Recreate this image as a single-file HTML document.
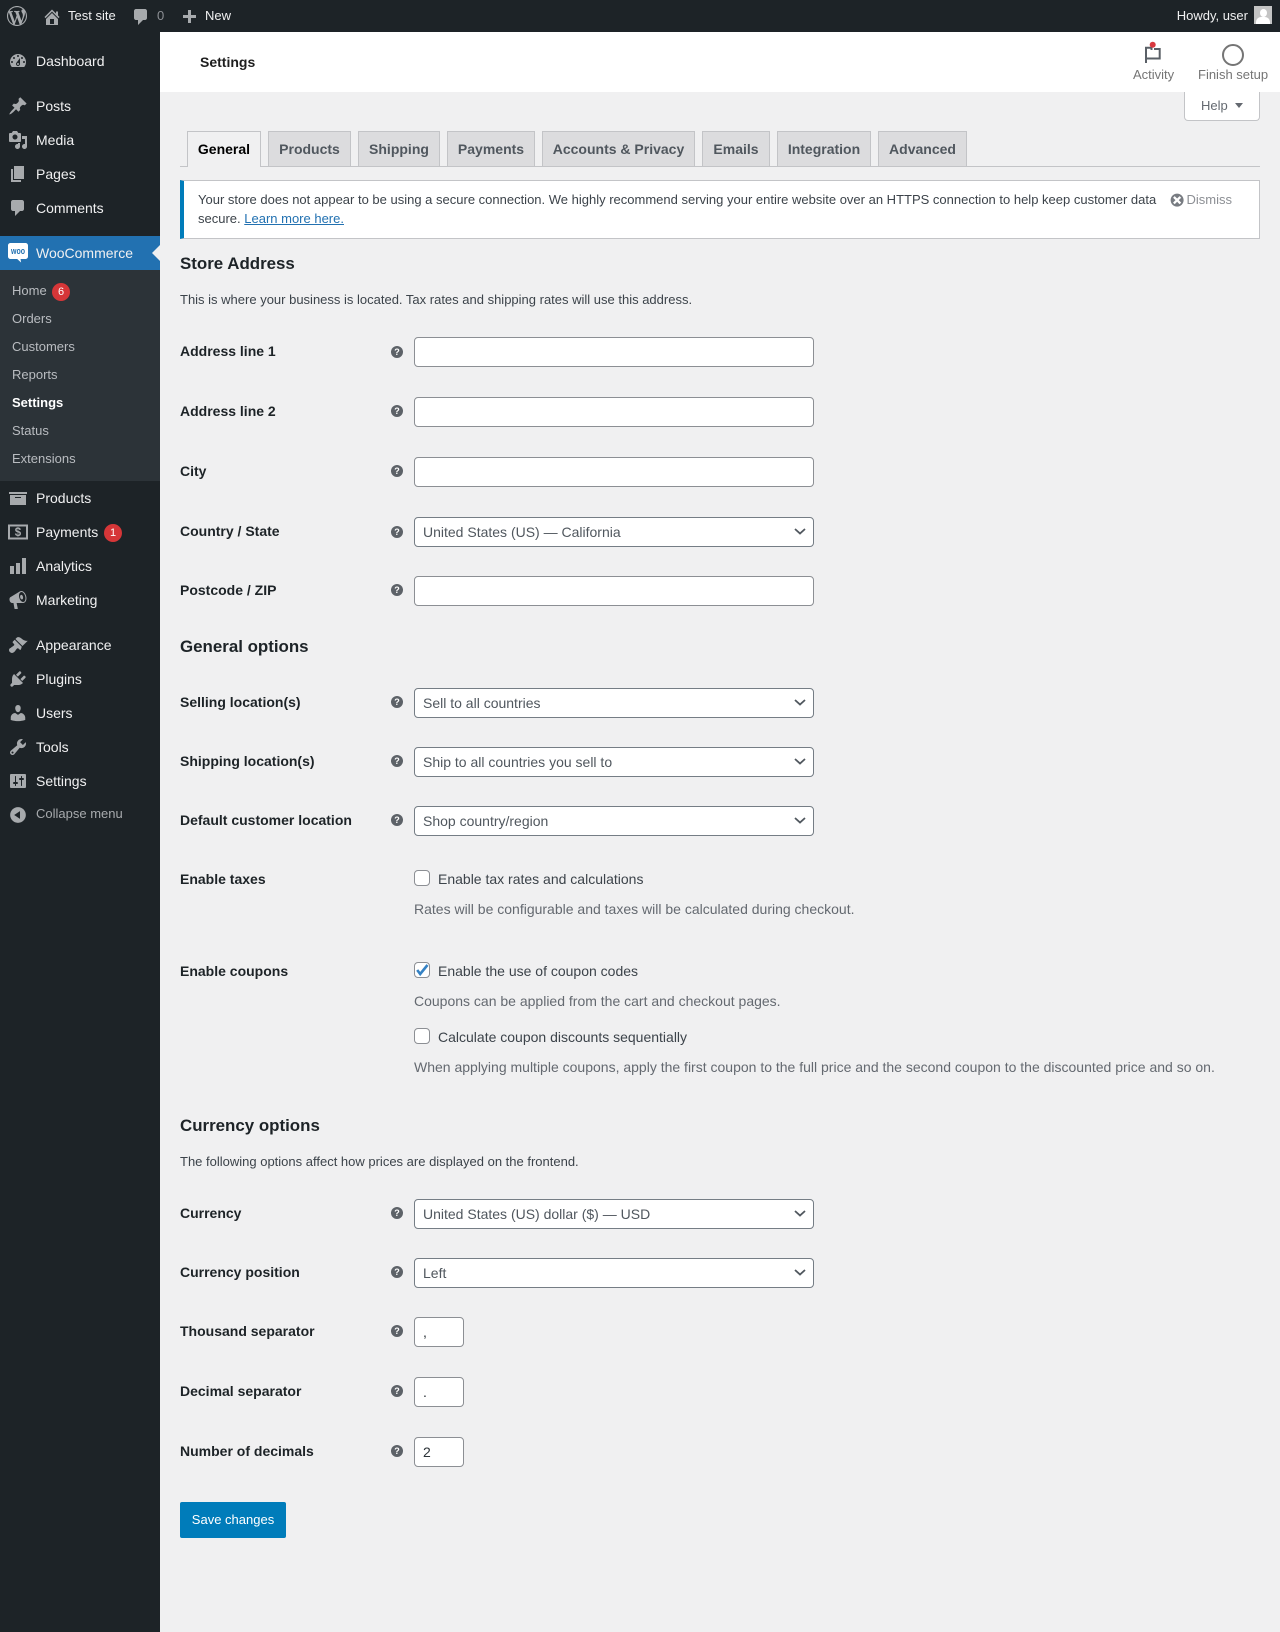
<!DOCTYPE html>
<html lang="en"><head><meta charset="utf-8"><title>Settings</title>
<style>
html,body{margin:0;padding:0;width:1280px;height:1632px;overflow:hidden;background:#f0f0f1;font-family:"Liberation Sans",sans-serif;font-size:13px;color:#3c434a}
div,span,a,svg{position:absolute;white-space:nowrap;display:block}
svg{overflow:visible}
a{position:static;display:inline;color:#2271b1;text-decoration:underline}
.t{line-height:20px;height:20px}
.m{left:36px;font-size:14px;color:#f0f0f1}
.i{left:8px;width:20px;height:20px;fill:#a7aaad}
.s{left:12px;font-size:13px;color:#b9bcc0}
.b{width:18px;height:18px;border-radius:50%;background:#d63638;color:#fff;font-size:11px;line-height:18px;text-align:center}
.bar{font-size:13px;color:#f0f0f1}
.h2{left:180px;font-size:16.9px;font-weight:700;color:#1d2327}
.d{left:180px;font-size:13px;color:#3c434a}
.l{left:180px;font-size:14px;font-weight:700;color:#1d2327}
.q{left:391px;width:12px;height:12px;border-radius:50%;background:#5d6268;color:#fff;font-size:9px;font-weight:700;line-height:12px;text-align:center}
.f{left:414px;width:398px;height:28px;background:#fff;border:1px solid #8c8f94;border-radius:4px}
.sel{border-color:#757d85;font-size:14px;color:#50575e;line-height:28px;text-indent:8px}
.sel svg{left:379px;top:10px;width:12px;height:7px;fill:none;stroke:#50575e;stroke-width:1.8}
.n{width:48px;font-size:14px;color:#2c3338;line-height:28px;text-indent:8px}
.c{left:414px;width:14px;height:14px;background:#fff;border:1px solid #8c8f94;border-radius:4px}
.cl{left:438px;font-size:14px;color:#3c434a}
.de{left:414px;font-size:14px;color:#646970}
.tab{box-sizing:border-box;top:131px;height:35px;line-height:34px;text-align:center;font-size:14px;font-weight:700;color:#50575e;background:#dcdcde;border:1px solid #c3c4c7;border-bottom:0}
</style></head><body>

<!-- admin bar -->
<div style="left:0;top:0;width:1280px;height:32px;background:#1d2327"></div>
<svg style="left:7px;top:6px;width:20px;height:20px;fill:#a7aaad" viewBox="0 0 20 20"><path d="M20 10c0-5.51-4.49-10-10-10C4.48 0 0 4.49 0 10c0 5.52 4.48 10 10 10 5.51 0 10-4.48 10-10zM7.78 15.37L4.37 6.22c.55-.02 1.17-.08 1.17-.08.5-.06.44-1.13-.06-1.11 0 0-1.45.11-2.37.11-.18 0-.37 0-.58-.01C4.12 2.69 6.87 1.11 10 1.11c2.33 0 4.45.87 6.05 2.34-.68-.11-1.65.39-1.65 1.58 0 .74.45 1.36.9 2.1.35.61.55 1.36.55 2.46 0 1.49-1.4 5-1.4 5l-3.03-8.37c.54-.02.82-.17.82-.17.5-.05.44-1.25-.06-1.22 0 0-1.44.12-2.38.12-.87 0-2.33-.12-2.33-.12-.5-.03-.56 1.2-.06 1.22l.92.08 1.26 3.41zM17.41 10c.24-.64.74-1.87.43-4.25.7 1.29 1.05 2.71 1.05 4.25 0 3.29-1.73 6.24-4.4 7.78.97-2.59 1.94-5.2 2.92-7.78zM6.1 18.09C3.12 16.65 1.11 13.53 1.11 10c0-1.3.23-2.48.72-3.59C3.25 10.3 4.67 14.2 6.1 18.09zm4.03-6.63l2.58 6.98c-.86.29-1.76.45-2.71.45-.79 0-1.57-.11-2.29-.33.81-2.38 1.62-4.74 2.42-7.1z"/></svg>
<svg style="left:42px;top:6.5px;width:20px;height:20px;fill:#a7aaad" viewBox="0 0 20 20"><path d="M16 8.5l1.53 1.53-1.06 1.06L10 4.62l-6.47 6.47-1.06-1.06L10 2.5l4 4v-2h2v4zm-6-2.46l6 5.99V18H4v-5.97zM12 17v-5H8v5h4z"/></svg>
<div class="t bar" style="left:68px;top:6px">Test site</div>
<svg style="left:131px;top:7px;width:20px;height:20px;fill:#a7aaad" viewBox="0 0 20 20"><path d="M5 2h9c1.100 0 2 .9 2 2v7c0 1.100-.9 2-2 2h-2l-5 5v-5H5c-1.100 0-2-.9-2-2V4c0-1.100.9-2 2-2z"/></svg>
<div class="t bar" style="left:157px;top:6px;color:#8c8f94">0</div>
<svg style="left:179px;top:8px;width:20px;height:20px;fill:#a7aaad" viewBox="0 0 20 20"><path d="M17 7v3h-5v5H9v-5H4V7h5V2h3v5h5z"/></svg>
<div class="t bar" style="left:205px;top:6px">New</div>
<div class="t bar" style="right:32px;top:6px">Howdy, user</div>
<div style="left:1254px;top:6px;width:18px;height:18px;background:#c4c4c4;overflow:hidden">
  <div style="left:5.500px;top:3px;width:7px;height:8px;border-radius:50%;background:#fff"></div>
  <div style="left:2px;top:11px;width:14px;height:9px;border-radius:5px 5px 0 0;background:#fff"></div>
</div>

<!-- sidebar -->
<div style="left:0;top:32px;width:160px;height:1600px;background:#1d2327"></div>
<div style="left:0;top:270px;width:160px;height:211px;background:#2c3338"></div>
<div style="left:0;top:236px;width:160px;height:34px;background:#2271b1"></div>
<div style="left:152px;top:245px;width:0;height:0;border:8px solid transparent;border-left:0;border-right-color:#f0f0f1"></div>

<svg class="i" style="top:51px" viewBox="0 0 20 20"><path d="M3.760 16h12.480c1.100-1.370 1.760-3.110 1.760-5 0-4.420-3.580-8-8-8s-8 3.580-8 8c0 1.890.66 3.630 1.760 5zM10 4c.55 0 1 .45 1 1s-.45 1-1 1-1-.45-1-1 .45-1 1-1zM6 6c.55 0 1 .45 1 1s-.45 1-1 1-1-.45-1-1 .45-1 1-1zm8 0c.55 0 1 .45 1 1s-.45 1-1 1-1-.45-1-1 .45-1 1-1zm-5.370 5.550L12 7v6c0 1.100-.9 2-2 2s-2-.9-2-2c0-.57.24-1.080.63-1.450zM4 10c.55 0 1 .45 1 1s-.45 1-1 1-1-.45-1-1 .45-1 1-1zm12 0c.55 0 1 .45 1 1s-.45 1-1 1-1-.45-1-1 .45-1 1-1zm-5 3c0-.55-.45-1-1-1s-1 .45-1 1 .45 1 1 1 1-.45 1-1z"/></svg>
<div class="t m" style="top:51px">Dashboard</div>
<svg class="i" style="top:96px" viewBox="0 0 20 20"><path d="M10.440 3.020l1.820-1.820 6.360 6.350-1.830 1.820c-1.050-.68-2.480-.57-3.410.36l-.75.75c-.92.93-1.040 2.350-.35 3.410l-1.830 1.820-2.410-2.410-2.800 2.790c-.42.42-3.380 2.710-3.800 2.290s1.860-3.390 2.280-3.810l2.790-2.790L4.100 9.360l1.830-1.820c1.050.69 2.480.57 3.400-.36l.75-.75c.93-.92 1.050-2.350.36-3.410z"/></svg>
<div class="t m" style="top:96px">Posts</div>
<svg class="i" style="top:130px" viewBox="0 0 20 20"><path d="M13 11V4c0-.55-.45-1-1-1h-1.670L9 1H5L3.670 3H2c-.55 0-1 .45-1 1v7c0 .55.45 1 1 1h10c.55 0 1-.45 1-1zM7 4.500c1.380 0 2.500 1.120 2.500 2.500S8.380 9.500 7 9.500 4.500 8.380 4.500 7 5.620 4.500 7 4.500zM14 6h5v10.500c0 1.380-1.120 2.500-2.500 2.500S14 17.880 14 16.500s1.120-2.500 2.500-2.500c.17 0 .34.02.5.05V9h-3V6zm-4 8.050V13h2v3.500c0 1.380-1.120 2.500-2.500 2.500S7 17.880 7 16.500 8.120 14 9.500 14c.17 0 .34.02.5.05z"/></svg>
<div class="t m" style="top:130px">Media</div>
<svg class="i" style="top:164px" viewBox="0 0 20 20"><path d="M6 15V2h10v13H6zm-1 1h8v2H3V5h2v11z"/></svg>
<div class="t m" style="top:164px">Pages</div>
<svg class="i" style="top:198px" viewBox="0 0 20 20"><path d="M5 2h9c1.100 0 2 .9 2 2v7c0 1.100-.9 2-2 2h-2l-5 5v-5H5c-1.100 0-2-.9-2-2V4c0-1.100.9-2 2-2z"/></svg>
<div class="t m" style="top:198px">Comments</div>

<svg style="left:8px;top:243px;width:20px;height:20px" viewBox="0 0 20 20"><path fill="#fff" d="M2.500 0h15C18.900 0 20 1.100 20 2.500v11c0 1.400-1.100 2.500-2.500 2.500H12.500l.6 3.500-3.900-3.500H2.500C1.100 16 0 14.900 0 13.500v-11C0 1.100 1.100 0 2.500 0z"/><text x="3" y="11" font-family="Liberation Sans" font-weight="700" font-size="9" textLength="14" lengthAdjust="spacingAndGlyphs" fill="#2271b1">woo</text></svg>
<div class="t m" style="top:243px">WooCommerce</div>

<div class="t s" style="top:281px">Home</div><div class="b" style="left:52px;top:283px">6</div>
<div class="t s" style="top:309px">Orders</div>
<div class="t s" style="top:337px">Customers</div>
<div class="t s" style="top:365px">Reports</div>
<div class="t s" style="top:393px;font-weight:700;color:#fff">Settings</div>
<div class="t s" style="top:421px">Status</div>
<div class="t s" style="top:449px">Extensions</div>

<svg class="i" style="top:488px" viewBox="0 0 20 20"><path d="M19 4v2H1V4h18zM2 7h16v10H2V7zm11 3V9H7v1h6z"/></svg>
<div class="t m" style="top:488px">Products</div>
<svg style="left:8px;top:522px;width:20px;height:20px" viewBox="0 0 20 20"><rect x="1" y="3.500" width="18" height="13" fill="none" stroke="#a7aaad" stroke-width="2"/><text x="10" y="14.200" font-family="Liberation Sans" font-weight="700" font-size="11.500" text-anchor="middle" fill="#a7aaad">$</text></svg>
<div class="t m" style="top:522px">Payments</div><div class="b" style="left:104px;top:524px">1</div>
<svg class="i" style="top:556px" viewBox="0 0 20 20"><path d="M18 18V2h-4v16h4zm-6 0V7H8v11h4zm-6 0v-8H2v8h4z"/></svg>
<div class="t m" style="top:556px">Analytics</div>
<svg class="i" style="top:590px" viewBox="0 0 20 20"><path d="M18.150 5.940c.46 1.620.38 3.220-.02 4.480-.42 1.280-1.260 2.180-2.300 2.480-.16.06-.26.06-.4.06-.06.02-.12.02-.18.02-.06.02-.14.02-.22.02H8.600l1.200 5.500c.02.14-.06.26-.14.34-.08.1-.24.16-.34.16H6.950c-.1 0-.26-.06-.34-.16-.08-.08-.16-.2-.14-.34l-1-5.500H4.250l-.02-.02c-.5.06-1.080-.18-1.540-.62s-.88-1.080-1.060-1.880c-.24-.8-.2-1.560-.02-2.200.18-.62.58-1.080 1.060-1.300l.02-.02 9-5.400c.1-.06.18-.1.24-.16.06-.04.14-.08.24-.12.16-.08.28-.12.5-.18 1.040-.3 2.240.1 3.220.98s1.840 2.240 2.260 3.860zm-2.580 5.980h-.02c.4-.1.74-.34 1.040-.7.58-.7.86-1.760.86-3.040 0-.64-.1-1.300-.28-1.980-.34-1.360-1.020-2.500-1.780-3.240s-1.680-1.100-2.460-.88c-.82.22-1.400.96-1.700 2-.32 1.040-.28 2.360.06 3.720.38 1.360 1 2.500 1.800 3.240.78.74 1.620 1.100 2.480.88zm-2.540-7.080c.22-.04.42-.02.62.04.38.16.76.48 1.020 1s.42 1.200.42 1.780c0 .3-.04.56-.12.8-.18.48-.44.84-.86.94-.34.1-.8-.06-1.140-.4s-.64-.86-.78-1.500c-.18-.62-.12-1.240.02-1.720s.48-.84.82-.94z"/></svg>
<div class="t m" style="top:590px">Marketing</div>

<svg class="i" style="top:635px" viewBox="0 0 20 20"><path d="M14.480 11.060L7.410 3.990l1.500-1.500c.5-.56 2.300-.47 3.510.32 1.210.8 1.430 1.280 2.910 2.100 1.180.64 2.450 1.260 4.450.85zm-.71.71L6.700 4.700 4.930 6.470c-.39.39-.39 1.020 0 1.410l1.060 1.060c.39.39.39 1.030 0 1.420-.6.6-1.430 1.110-2.210 1.690-.35.26-.7.53-1.010.84C1.430 13.260 1 14.190 1 15c0 .75.3 1.470.88 2.060.59.58 1.320.88 2.060.88.83 0 1.740-.42 2.550-1.230.31-.31.58-.66.84-1.010.58-.78 1.090-1.610 1.690-2.210.39-.39 1.030-.39 1.420 0l1.060 1.060c.39.39 1.020.39 1.410 0z"/></svg>
<div class="t m" style="top:635px">Appearance</div>
<svg class="i" style="top:669px" viewBox="0 0 20 20"><path d="M13.110 4.360L9.870 7.600 8 5.730l3.240-3.240c.35-.34 1.050-.2 1.560.32.52.51.66 1.210.31 1.550zm-8 1.770l.91-1.120 9.010 9.010-1.190.84c-.71.71-2.630 1.160-3.820 1.160H6.140L4.900 17.260c-.59.59-1.540.59-2.120 0-.59-.58-.59-1.530 0-2.120l1.240-1.240v-3.880c0-1.130.4-3.190 1.090-3.890zm7.260 3.970l3.240-3.240c.34-.35 1.040-.21 1.550.31.52.51.66 1.210.31 1.550l-3.240 3.250z"/></svg>
<div class="t m" style="top:669px">Plugins</div>
<svg class="i" style="top:703px" viewBox="0 0 20 20"><path d="M10 9.250c-2.270 0-2.730-3.440-2.730-3.440C7 4.020 7.820 2 9.970 2c2.160 0 2.980 2.020 2.710 3.810 0 0-.41 3.440-2.680 3.440zm0 2.570L12.720 10c2.390 0 4.520 2.330 4.520 4.530v2.490s-3.650 1.130-7.240 1.130c-3.650 0-7.240-1.130-7.240-1.130v-2.490c0-2.250 1.940-4.480 4.470-4.480z"/></svg>
<div class="t m" style="top:703px">Users</div>
<svg class="i" style="top:737px" viewBox="0 0 20 20"><path d="M16.680 9.770c-1.340 1.340-3.300 1.670-4.950.99l-5.410 6.520c-.99.99-2.590.99-3.580 0s-.99-2.590 0-3.570l6.520-5.420c-.68-1.650-.35-3.610.99-4.950 1.280-1.280 3.120-1.620 4.720-1.060l-2.890 2.890 2.820 2.820 2.860-2.870c.53 1.580.18 3.390-1.080 4.650zM3.810 16.210c.4.39 1.040.39 1.430 0 .4-.4.4-1.040 0-1.430-.39-.4-1.030-.4-1.430 0-.39.39-.39 1.030 0 1.430z"/></svg>
<div class="t m" style="top:737px">Tools</div>
<svg class="i" style="top:771px" viewBox="0 0 20 20"><path fill-rule="evenodd" d="M18 16V4c0-.55-.45-1-1-1H3c-.55 0-1 .45-1 1v12c0 .55.45 1 1 1h14c.55 0 1-.45 1-1zM8 11h1c.55 0 1 .45 1 1s-.45 1-1 1H8v1.500c0 .28-.22.5-.5.5s-.5-.22-.5-.5V13H6c-.55 0-1-.45-1-1s.45-1 1-1h1V5.500c0-.28.22-.5.5-.5s.5.22.5.5V11zm5-2h-1c-.55 0-1-.45-1-1s.45-1 1-1h1V5.500c0-.28.22-.5.5-.5s.5.22.5.5V7h1c.55 0 1 .45 1 1s-.45 1-1 1h-1v5.500c0 .28-.22.5-.5.5s-.5-.22-.5-.5V9z"/></svg>
<div class="t m" style="top:771px">Settings</div>
<svg class="i" style="top:805px" viewBox="0 0 20 20"><path d="M10 2.160c4.330 0 7.840 3.510 7.840 7.840s-3.510 7.840-7.840 7.840S2.160 14.330 2.160 10 5.710 2.160 10 2.160zm2 11.720V6.120L6.180 9.970z"/></svg>
<div class="t m" style="top:804px;font-size:13px;color:#a7aaad">Collapse menu</div>

<!-- header -->
<div style="left:160px;top:32px;width:1120px;height:60px;background:#fff"></div>
<div class="t" style="left:200px;top:52px;font-size:14px;font-weight:700;color:#1e1e1e">Settings</div>
<svg style="left:1143px;top:42px;width:20px;height:24px" viewBox="0 0 20 24"><path d="M3 21V5.700h5.500V8M11 7h5.700v9.500H3" fill="none" stroke="#5a6067" stroke-width="2"/><circle cx="9.700" cy="2.800" r="3" fill="#d9383f"/></svg>
<div class="t" style="left:1133px;top:65px;width:40px;text-align:center;font-size:13px;color:#757575">Activity</div>
<div style="left:1222px;top:44px;width:18px;height:18px;border:2px solid #757575;border-radius:50%"></div>
<div class="t" style="left:1198px;top:65px;font-size:13px;color:#757575">Finish setup</div>

<!-- help -->
<div style="left:1184px;top:92px;width:74px;height:28px;background:#fff;border:1px solid #c3c4c7;border-top:0;border-radius:0 0 4px 4px"></div>
<div class="t" style="left:1201px;top:96px;font-size:13px;color:#646970">Help</div>
<div style="left:1235px;top:103px;width:0;height:0;border:4px solid transparent;border-bottom:0;border-top:5px solid #646970"></div>

<!-- tabs -->
<div style="left:180px;top:166px;width:1080px;height:1px;background:#c3c4c7"></div>
<div class="tab" style="left:187px;width:74px;height:36px;background:#f0f0f1;color:#000">General</div>
<div class="tab" style="left:268px;width:83px">Products</div>
<div class="tab" style="left:358px;width:82px">Shipping</div>
<div class="tab" style="left:447px;width:88px">Payments</div>
<div class="tab" style="left:542px;width:153px">Accounts &amp; Privacy</div>
<div class="tab" style="left:702px;width:68px">Emails</div>
<div class="tab" style="left:777px;width:94px">Integration</div>
<div class="tab" style="left:878px;width:89px">Advanced</div>

<!-- notice -->
<div style="left:180px;top:180px;width:1075px;height:57px;background:#fff;border:1px solid #c3c4c7;border-left:4px solid #007cba"></div>
<div class="t" style="left:198px;top:190px;font-size:13px;color:#3c434a">Your store does not appear to be using a secure connection. We highly recommend serving your entire website over an HTTPS connection to help keep customer data</div>
<div class="t" style="left:198px;top:209px;font-size:13px;color:#3c434a">secure. <a>Learn more here.</a></div>
<svg style="left:1169.400px;top:191.700px;width:16.250px;height:16.250px;fill:#787c82" viewBox="0 0 20 20"><path d="M10 2c4.420 0 8 3.580 8 8s-3.580 8-8 8-8-3.580-8-8 3.580-8 8-8zm5 11l-3-3 3-3-2-2-3 3-3-3-2 2 3 3-3 3 2 2 3-3 3 3z"/></svg>
<div class="t" style="left:1186.500px;top:190px;font-size:13px;color:#8c8f94">Dismiss</div>

<!-- store address -->
<div class="t h2" style="top:254px">Store Address</div>
<div class="t d" style="top:290px">This is where your business is located. Tax rates and shipping rates will use this address.</div>

<div class="t l" style="top:341px">Address line 1</div><div class="q" style="top:346px">?</div><div class="f" style="top:337px"></div>
<div class="t l" style="top:401px">Address line 2</div><div class="q" style="top:405px">?</div><div class="f" style="top:397px"></div>
<div class="t l" style="top:461px">City</div><div class="q" style="top:465px">?</div><div class="f" style="top:457px"></div>
<div class="t l" style="top:521px">Country / State</div><div class="q" style="top:526px">?</div>
<div class="f sel" style="top:517px">United States (US) — California<svg viewBox="0 0 12 7"><path d="M1 1l5 4.500L11 1"/></svg></div>
<div class="t l" style="top:580px">Postcode / ZIP</div><div class="q" style="top:584px">?</div><div class="f" style="top:576px"></div>

<!-- general options -->
<div class="t h2" style="top:637px">General options</div>
<div class="t l" style="top:692px">Selling location(s)</div><div class="q" style="top:696px">?</div>
<div class="f sel" style="top:688px">Sell to all countries<svg viewBox="0 0 12 7"><path d="M1 1l5 4.500L11 1"/></svg></div>
<div class="t l" style="top:751px">Shipping location(s)</div><div class="q" style="top:755px">?</div>
<div class="f sel" style="top:747px">Ship to all countries you sell to<svg viewBox="0 0 12 7"><path d="M1 1l5 4.500L11 1"/></svg></div>
<div class="t l" style="top:810px">Default customer location</div><div class="q" style="top:814px">?</div>
<div class="f sel" style="top:806px">Shop country/region<svg viewBox="0 0 12 7"><path d="M1 1l5 4.500L11 1"/></svg></div>

<div class="t l" style="top:869px">Enable taxes</div>
<div class="c" style="top:870px"></div>
<div class="t cl" style="top:869px">Enable tax rates and calculations</div>
<div class="t de" style="top:899px">Rates will be configurable and taxes will be calculated during checkout.</div>

<div class="t l" style="top:961px">Enable coupons</div>
<div class="c" style="top:962px"><svg style="left:0;top:0;width:14px;height:14px" viewBox="0 0 14 14"><path d="M2.200 7l3 4 7.300-9" fill="none" stroke="#3582c4" stroke-width="2.600"/></svg></div>
<div class="t cl" style="top:961px">Enable the use of coupon codes</div>
<div class="t de" style="top:991px">Coupons can be applied from the cart and checkout pages.</div>
<div class="c" style="top:1028px"></div>
<div class="t cl" style="top:1027px">Calculate coupon discounts sequentially</div>
<div class="t de" style="top:1057px">When applying multiple coupons, apply the first coupon to the full price and the second coupon to the discounted price and so on.</div>

<!-- currency -->
<div class="t h2" style="top:1116px">Currency options</div>
<div class="t d" style="top:1152px">The following options affect how prices are displayed on the frontend.</div>
<div class="t l" style="top:1203px">Currency</div><div class="q" style="top:1207px">?</div>
<div class="f sel" style="top:1199px">United States (US) dollar ($) — USD<svg viewBox="0 0 12 7"><path d="M1 1l5 4.500L11 1"/></svg></div>
<div class="t l" style="top:1262px">Currency position</div><div class="q" style="top:1266px">?</div>
<div class="f sel" style="top:1258px">Left<svg viewBox="0 0 12 7"><path d="M1 1l5 4.500L11 1"/></svg></div>
<div class="t l" style="top:1321px">Thousand separator</div><div class="q" style="top:1325px">?</div>
<div class="f n" style="top:1317px">,</div>
<div class="t l" style="top:1381px">Decimal separator</div><div class="q" style="top:1385px">?</div>
<div class="f n" style="top:1377px">.</div>
<div class="t l" style="top:1441px">Number of decimals</div><div class="q" style="top:1445px">?</div>
<div class="f n" style="top:1437px">2</div>

<div style="left:180px;top:1502px;width:106px;height:36px;background:#007cba;border-radius:2px;color:#fff;font-size:13px;line-height:36px;text-align:center">Save changes</div>
</body></html>
